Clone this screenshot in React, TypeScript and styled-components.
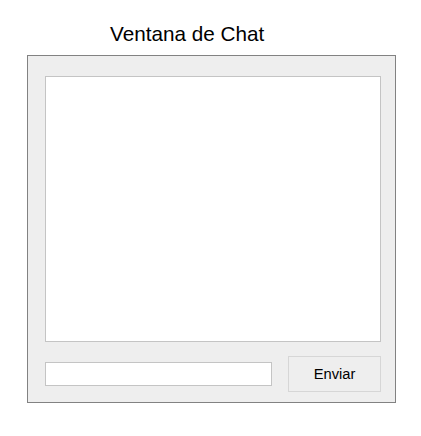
import styled, { createGlobalStyle } from "styled-components"

const GlobalStyle = createGlobalStyle`
  body {
    margin: 0;
    background: #ffffff;
    font-family: "Liberation Sans", Arial, sans-serif;
  }
`

const Page = styled.div`
  display: flex;
  flex-direction: column;
  align-items: flex-start;
  padding: 22px 0 0 27px;
`

const Title = styled.h2`
  margin: 0 0 9px 83px;
  font-size: 20.7px;
  font-weight: normal;
  line-height: 24px;
  color: #000000;
`

const ChatWindow = styled.div`
  box-sizing: border-box;
  width: 369px;
  height: 348px;
  display: flex;
  flex-direction: column;
  gap: 14px;
  padding: 20px 14px 10px 17px;
  background: #eeeeee;
  border: 1px solid #828282;
`

const Messages = styled.textarea`
  box-sizing: border-box;
  width: 336px;
  height: 266px;
  margin: 0;
  padding: 4px;
  resize: none;
  background: #ffffff;
  border: 1px solid #c4c4c4;
  outline: none;
  font-family: "Liberation Sans", Arial, sans-serif;
  font-size: 13px;
`

const InputRow = styled.div`
  display: flex;
  align-items: center;
  gap: 16px;
  height: 36px;
`

const MessageInput = styled.input`
  box-sizing: border-box;
  width: 227px;
  height: 24px;
  margin: 0;
  padding: 0 4px;
  background: #ffffff;
  border: 1px solid #c4c4c4;
  outline: none;
  font-family: "Liberation Sans", Arial, sans-serif;
  font-size: 13px;
`

const SendButton = styled.button`
  box-sizing: border-box;
  width: 93px;
  height: 36px;
  margin: 0;
  padding: 0;
  background: #eeeeee;
  border: 1px solid #d6d6d6;
  color: #000000;
  font-family: "Liberation Sans", Arial, sans-serif;
  font-size: 14.7px;
  cursor: pointer;
`

export default function App() {
  return (
    <>
      <GlobalStyle />
      <Page>
        <Title>Ventana de Chat</Title>
        <ChatWindow>
          <Messages readOnly />
          <InputRow>
            <MessageInput type="text" />
            <SendButton>Enviar</SendButton>
          </InputRow>
        </ChatWindow>
      </Page>
    </>
  )
}
